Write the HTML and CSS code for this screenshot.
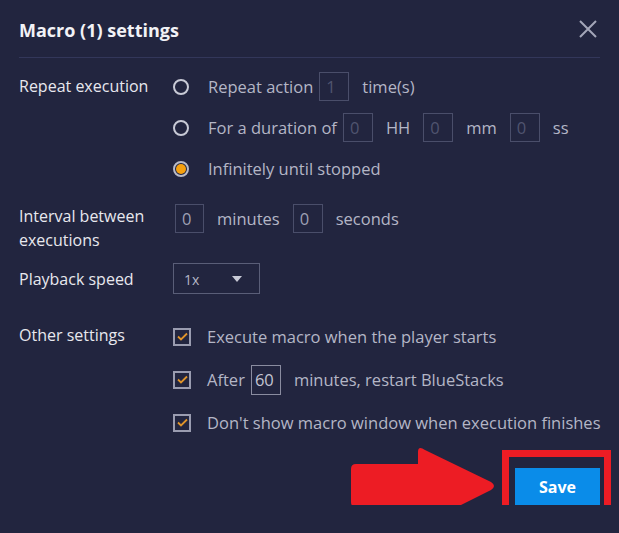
FILE: index.html
```html
<!DOCTYPE html>
<html lang="en">
<head>
    <meta charset="UTF-8">
    <meta name="viewport" content="width=device-width, initial-scale=1.0">
    <title>Macro settings</title>
    <link rel="stylesheet" href="styles.css">
</head>
<body>
    <div class="dialog">
        <div class="header">
            <h1>Macro (1) settings</h1>
            <svg class="close" width="18" height="18" viewBox="0 0 18 18">
                <path d="M1 1 L17 17 M17 1 L1 17" stroke="#a4a6b8" stroke-width="2" fill="none"/>
            </svg>
        </div>

        <div class="section repeat">
            <div class="label">Repeat execution</div>
            <div class="options">
                <div class="row">
                    <span class="radio"></span>
                    <span class="text">Repeat action</span>
                    <span class="box dim tight">1</span>
                    <span class="text">time(s)</span>
                </div>
                <div class="row">
                    <span class="radio"></span>
                    <span class="text">For a duration of</span>
                    <span class="box dim tight">0</span>
                    <span class="text">HH</span>
                    <span class="box dim">0</span>
                    <span class="text">mm</span>
                    <span class="box dim">0</span>
                    <span class="text">ss</span>
                </div>
                <div class="row">
                    <span class="radio checked"></span>
                    <span class="text">Infinitely until stopped</span>
                </div>
            </div>
        </div>

        <div class="section interval">
            <div class="label">Interval between executions</div>
            <div class="options">
                <div class="row top">
                    <span class="box first">0</span>
                    <span class="text">minutes</span>
                    <span class="box">0</span>
                    <span class="text">seconds</span>
                </div>
            </div>
        </div>

        <div class="section speed">
            <div class="label">Playback speed</div>
            <div class="options">
                <div class="select">
                    <span>1x</span>
                    <span class="caret"></span>
                </div>
            </div>
        </div>

        <div class="section other">
            <div class="label">Other settings</div>
            <div class="options">
                <div class="row check-row">
                    <span class="checkbox"><svg width="13" height="13" viewBox="0 0 13 13"><path d="M2 6.5 L5 9.5 L11 3.5" stroke="#e0942a" stroke-width="1.8" fill="none"/></svg></span>
                    <span class="text">Execute macro when the player starts</span>
                </div>
                <div class="row check-row">
                    <span class="checkbox"><svg width="13" height="13" viewBox="0 0 13 13"><path d="M2 6.5 L5 9.5 L11 3.5" stroke="#e0942a" stroke-width="1.8" fill="none"/></svg></span>
                    <span class="text">After</span>
                    <span class="box light tight">60</span>
                    <span class="text">minutes, restart BlueStacks</span>
                </div>
                <div class="row check-row">
                    <span class="checkbox"><svg width="13" height="13" viewBox="0 0 13 13"><path d="M2 6.5 L5 9.5 L11 3.5" stroke="#e0942a" stroke-width="1.8" fill="none"/></svg></span>
                    <span class="text">Don't show macro window when execution finishes</span>
                </div>
            </div>
        </div>

        <div class="footer">
            <button class="save">Save</button>

            <!-- red call-out drawn over the footer -->
            <svg class="arrow" width="146" height="82" viewBox="0 0 146 82">
                <path d="M6 18 L68 18 L68 6 Q68 -1 75 4 L141 36 Q147 40 141 44 L75 77 Q68 82 68 75 L68 61 L6 61 Q1 61 1 56 L1 23 Q1 18 6 18 Z" fill="#ed1c24"/>
            </svg>
            <div class="highlight"></div>
        </div>
    </div>
</body>
</html>
```

FILE: styles.css
```css
body {
    margin: 0;
    background: #22253f;
    font-family: 'Open Sans', 'Noto Sans', sans-serif;
    color: #b4b6c6;
}

.dialog {
    padding: 0 19px;
}

.header {
    height: 57px;
    display: flex;
    justify-content: space-between;
    align-items: center;
    border-bottom: 1px solid #33375a;
}

h1 {
    margin: 3px 0 0 0;
    font-size: 18px;
    font-weight: 700;
    color: #f2f2f6;
}

.close {
    margin-right: 3px;
}

.section {
    display: flex;
}

.label {
    width: 154px;
    flex: none;
    font-size: 16px;
    color: #e8e8ee;
}

.options {
    display: flex;
    flex-direction: column;
}

.row {
    display: flex;
    align-items: center;
    font-size: 16.5px;
}

.text {
    white-space: nowrap;
}

/* repeat execution */
.repeat {
    padding-top: 8px;
}

.repeat .label {
    line-height: 41px;
}

.repeat .row {
    height: 41px;
}

.radio {
    width: 16px;
    height: 16px;
    box-sizing: border-box;
    border: 2px solid #c8cad6;
    border-radius: 50%;
    margin-right: 19px;
    display: flex;
    align-items: center;
    justify-content: center;
}

.radio.checked {
    border-color: #b9bbc8;
}

.radio.checked::after {
    content: "";
    width: 10px;
    height: 10px;
    border-radius: 50%;
    background: #f5a00f;
}

.box {
    width: 30px;
    height: 29px;
    box-sizing: border-box;
    border: 1px solid #4a4e6a;
    margin: 0 13px;
    padding-left: 6px;
    line-height: 27px;
    color: #9ea0b4;
}

.box.tight {
    margin-left: 6px;
}

.box.dim {
    color: #50546f;
}

.box.first {
    width: 29px;
    margin-left: 2px;
}

.box.light {
    height: 30px;
    border-color: #8a8ca0;
    color: #c2c4d2;
    padding-left: 3px;
}

/* interval */
.interval {
    margin-top: 15px;
}

.interval .label {
    line-height: 24px;
}

.interval .row {
    height: 29px;
}

/* playback speed */
.speed {
    margin-top: 11px;
    align-items: center;
}

.select {
    width: 87px;
    height: 31px;
    box-sizing: border-box;
    border: 1px solid #5a5e78;
    display: flex;
    align-items: center;
    justify-content: space-between;
    padding: 2px 17px 0 10px;
    font-size: 14px;
    color: #b4b6c6;
}

.caret {
    width: 0;
    height: 0;
    border-left: 5px solid transparent;
    border-right: 5px solid transparent;
    border-top: 6px solid #c8cad6;
    margin-bottom: 2px;
}

/* other settings */
.other {
    margin-top: 21px;
}

.other .label {
    line-height: 40px;
}

.check-row {
    height: 43px;
}

.checkbox {
    width: 18px;
    height: 18px;
    box-sizing: border-box;
    border: 2px solid #9a9cb0;
    margin-right: 16px;
    display: flex;
    align-items: center;
    justify-content: center;
}

/* footer */
.footer {
    position: relative;
    display: flex;
    justify-content: flex-end;
    margin-top: 24px;
}

.save {
    width: 85px;
    height: 37px;
    border: none;
    background: #0a8ce9;
    color: #ffffff;
    font-family: 'Open Sans', 'Noto Sans', sans-serif;
    font-size: 16px;
    font-weight: 700;
}

.arrow {
    position: absolute;
    left: 331px;
    top: -22px;
}

.highlight {
    position: absolute;
    left: 483px;
    top: -18px;
    width: 109px;
    height: 73px;
    box-sizing: border-box;
    border: 7px solid #ed1c24;
}
```
